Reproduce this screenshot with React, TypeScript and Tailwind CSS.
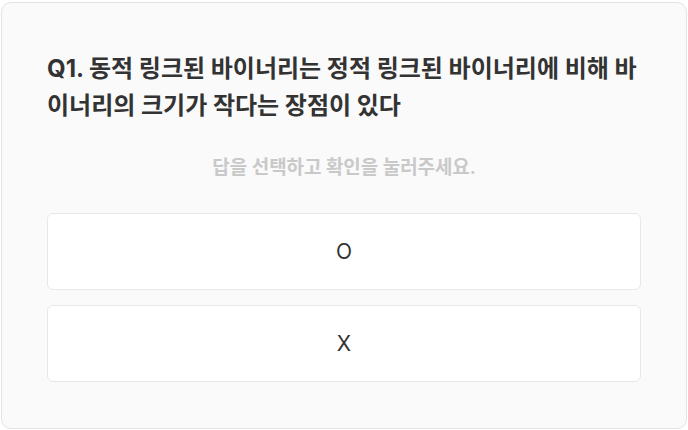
import React from "react";

export default function App() {
  const options = ["O", "X"];

  return (
    <div className="w-[688px] h-[430px] bg-white pt-[2px] px-[1px] font-['Inter','Noto_Sans_CJK_KR',sans-serif]">
      <div className="h-[427px] bg-[#fafafa] border border-[#e3e3e3] rounded-[10px] px-[45px] pt-[47px]">
        <h2 className="text-[24px] leading-[37px] font-bold text-[#333333]">
          Q1. 동적 링크된 바이너리는 정적 링크된 바이너리에 비해 바이너리의 크기가 작다는 장점이 있다
        </h2>
        <p className="mt-[31px] text-center text-[19px] leading-[26px] font-semibold text-[#c9c9c9] tracking-[-0.1px]">
          답을 선택하고 확인을 눌러주세요.
        </p>
        <div className="mt-[32px] flex flex-col gap-[15px]">
          {options.map((o) => (
            <button
              key={o}
              className="h-[77px] w-full bg-white border border-[#e8e8e8] rounded-[6px] text-[21px] text-[#333333] flex items-center justify-center"
            >
              {o}
            </button>
          ))}
        </div>
      </div>
    </div>
  );
}
